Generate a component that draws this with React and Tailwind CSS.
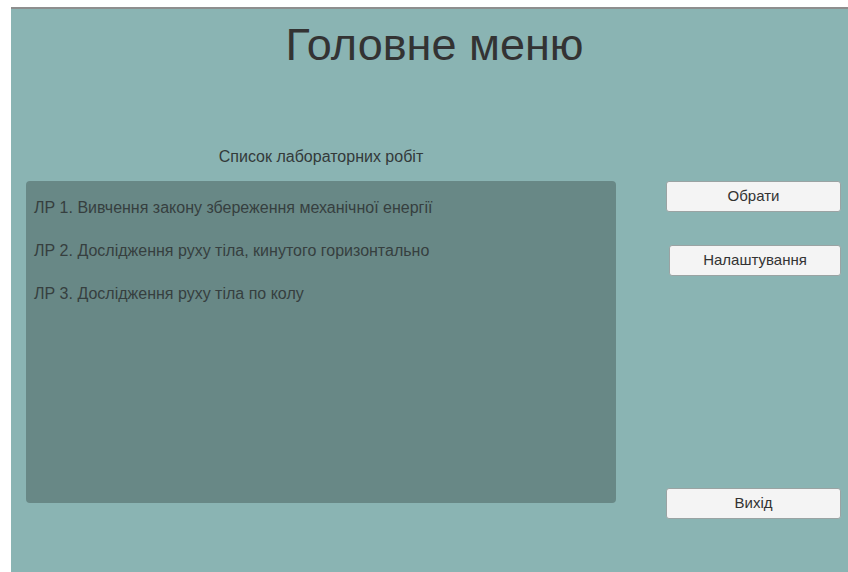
export default function App() {
  const labs = [
    "ЛР 1. Вивчення закону збереження механічної енергії",
    "ЛР 2. Дослідження руху тіла, кинутого горизонтально",
    "ЛР 3. Дослідження руху тіла по колу",
  ];
  const font = { fontFamily: '"Liberation Sans", Arial, sans-serif' };
  return (
    <div className="w-[848px] h-[572px] bg-white flex flex-col overflow-hidden" style={font}>
      <div className="h-[7px] shrink-0" />
      <div className="h-[2px] ml-[11px] bg-[#8e8e8e] shrink-0" />
      <div className="flex-1 ml-[11px] bg-[#8ab4b3] flex flex-col">
        <h1 className="text-center text-[45px] leading-[46px] pt-[13px] pl-[10px] text-[#333333] font-normal">
          Головне меню
        </h1>
        <div className="flex mt-[80px]">
          <div className="ml-[15px] w-[590px] flex flex-col">
            <div className="text-center text-[16px] leading-[18px] text-[#333a3a]">
              Список лабораторних робіт
            </div>
            <div className="mt-[15px] h-[322px] rounded-[4px] bg-[#688886] px-[8px] pt-[18px] flex flex-col gap-[25px]">
              {labs.map((l) => (
                <div key={l} className="text-[16px] leading-[18px] text-[#363f3f]">
                  {l}
                </div>
              ))}
            </div>
          </div>
          <div className="ml-[50px] w-[175px] flex flex-col pt-[33px]">
            <button className="h-[31px] w-[175px] rounded-[3px] border border-[#9aa3a3] bg-[#f4f4f4] text-[15px] text-[#333333]">
              Обрати
            </button>
            <button className="mt-[33px] ml-[3px] h-[31px] w-[172px] rounded-[3px] border border-[#9aa3a3] bg-[#f4f4f4] text-[15px] text-[#333333]">
              Налаштування
            </button>
            <button className="mt-[212px] h-[31px] w-[175px] rounded-[3px] border border-[#9aa3a3] bg-[#f4f4f4] text-[15px] text-[#333333]">
              Вихід
            </button>
          </div>
        </div>
      </div>
    </div>
  );
}
